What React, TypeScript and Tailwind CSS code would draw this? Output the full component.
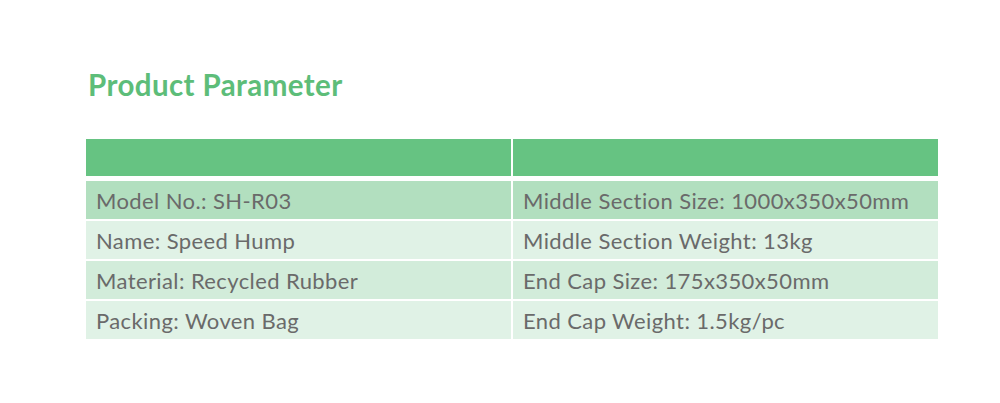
export default function App() {
  const rows = [
    ["Model No.: SH-R03", "Middle Section Size: 1000x350x50mm", "bg-[#b2dfbf]"],
    ["Name: Speed Hump", "Middle Section Weight: 13kg", "bg-[#e0f2e6]"],
    ["Material: Recycled Rubber", "End Cap Size: 175x350x50mm", "bg-[#d2ecda]"],
    ["Packing: Woven Bag", "End Cap Weight: 1.5kg/pc", "bg-[#e0f2e6]"],
  ];

  return (
    <div className="w-[1000px] h-[403px] bg-white font-['Lato',sans-serif]">
      <div className="pl-[88px] pt-[67px]">
        <h1 className="text-[29.5px] font-bold leading-[36px] tracking-[0.4px] text-[#5dbd79]">Product Parameter</h1>
      </div>
      <div className="ml-[86px] mt-[36px] w-[852px]">
        <div className="flex gap-[2px] h-[37px]">
          <div className="flex-1 bg-[#66c382]"></div>
          <div className="flex-1 bg-[#66c382]"></div>
        </div>
        <div className="mt-[5px] flex flex-col gap-[2px]">
          {rows.map(([left, right, bg]) => (
            <div key={left} className="flex gap-[2px] h-[38px]">
              <div className={`flex-1 ${bg} flex items-center pl-[10px] text-[22px] text-[#6a6a6a] tracking-[0.4px]`}>{left}</div>
              <div className={`flex-1 ${bg} flex items-center pl-[10px] text-[22px] text-[#6a6a6a] tracking-[0.4px]`}>{right}</div>
            </div>
          ))}
        </div>
      </div>
    </div>
  );
}
